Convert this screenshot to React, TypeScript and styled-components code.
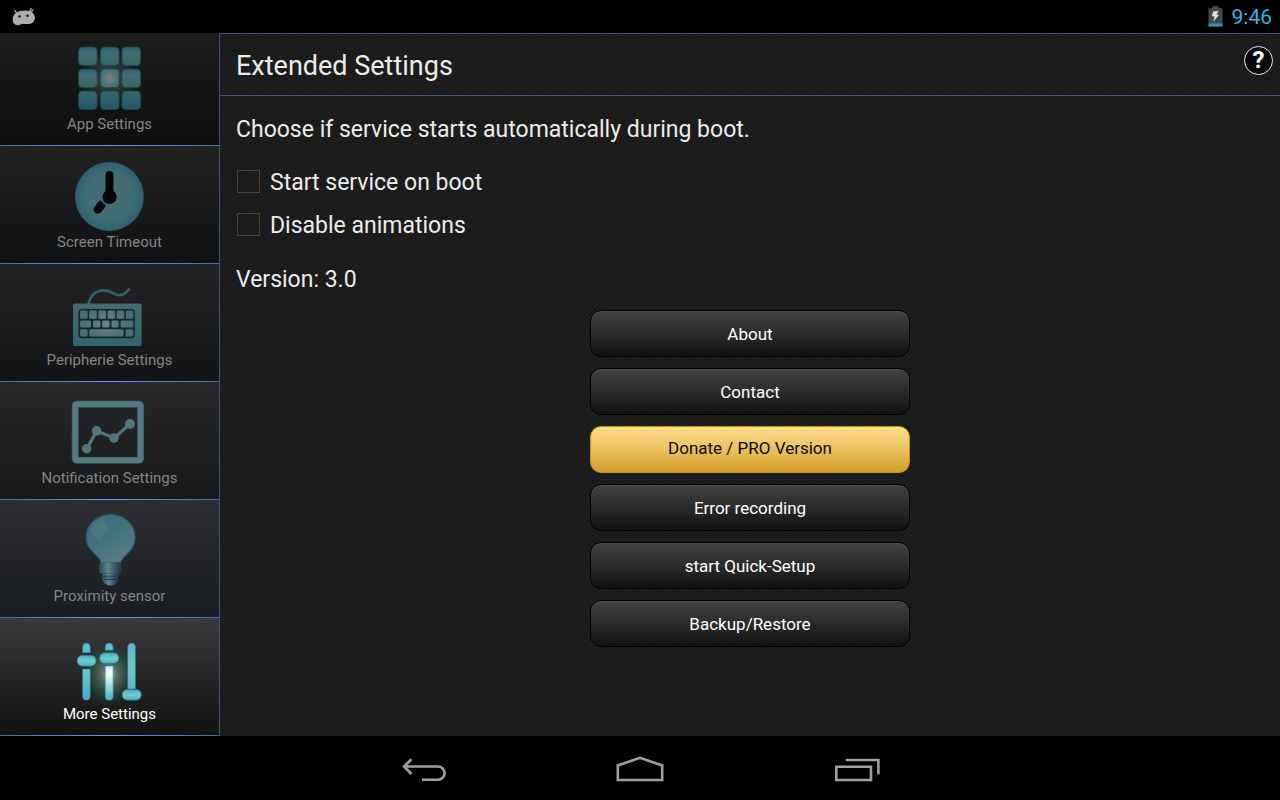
import React, { useState } from "react";
import styled, { createGlobalStyle } from "styled-components";

const GlobalStyle = createGlobalStyle`
  *, *::before, *::after { box-sizing: border-box; }
  html, body, #root { height: 100%; }
  body {
    margin: 0;
    background: #000;
    color: #ececec;
    font-family: Roboto, "Noto Sans", sans-serif;
  }
  button, input { font: inherit; color: inherit; }
`;

const Screen = styled.div`
  display: flex;
  flex-direction: column;
  min-height: 100%;
`;

const StatusBar = styled.header`
  display: flex;
  align-items: center;
  justify-content: space-between;
  height: 33px;
  padding: 0 8px 0 11px;
  background: #000;
`;

const StatusInfo = styled.div`
  display: flex;
  align-items: center;
  gap: 9px;
`;

const Clock = styled.time`
  color: #33b5e5;
  font-size: 21px;
  line-height: 33px;
  padding-top: 2px;
`;

const Body = styled.div`
  display: flex;
  flex: 1;
`;

const Sidebar = styled.nav`
  display: flex;
  flex-direction: column;
  flex: 0 0 220px;
  border-right: 1px solid #3c5284;
`;

const Tab = styled.button<{ $from: string; $to: string; $active: boolean }>`
  display: flex;
  flex-direction: column;
  align-items: center;
  justify-content: flex-end;
  flex: 1 0 118px;
  padding: 0 0 11px;
  border: 0;
  border-bottom: 1px solid;
  border-image: linear-gradient(90deg, #486cb0, #6496ff 50%, #486cb0) 1;
  background: linear-gradient(${(p) => p.$from}, ${(p) => p.$to});
  color: ${(p) => (p.$active ? "#ffffff" : "#858586")};
  font-size: 15px;
  line-height: 20px;
  cursor: pointer;

  &:first-child { flex-basis: 113px; }
`;

const TabIcon = styled.svg`
  display: block;
  width: 73px;
  height: 72px;
  overflow: visible;
`;

const Panel = styled.main`
  flex: 1;
  min-width: 0;
  background-color: #1d1d1d;
  background-image: linear-gradient(135deg, #1a1a1a 25%, #1f1f1f 25%, #1f1f1f 50%, #1a1a1a 50%, #1a1a1a 75%, #1f1f1f 75%);
  background-size: 5px 5px;
`;

const PanelHeader = styled.div`
  display: flex;
  align-items: center;
  justify-content: space-between;
  height: 63px;
  padding: 0 7px 0 16px;
  border-top: 1px solid #41547c;
  border-bottom: 1px solid #41547c;
`;

const Title = styled.h1`
  margin: 0;
  padding-top: 2px;
  font-size: 27px;
  font-weight: 400;
  line-height: 32px;
`;

const HelpButton = styled.button`
  width: 29px;
  height: 29px;
  margin-bottom: 8px;
  padding: 0;
  border: 1px solid #dcebff;
  border-radius: 50%;
  background: #090909;
  color: #fff;
  font-size: 24px;
  font-weight: 700;
  line-height: 27px;
  text-align: center;
`;

const Content = styled.div`
  padding: 20px 16px;
`;

const Text = styled.p`
  margin: 0;
  font-size: 23px;
  line-height: 28px;
`;

const Options = styled.div`
  padding: 17px 0 19px;
`;

const Option = styled.label`
  display: flex;
  align-items: center;
  gap: 10px;
  height: 43px;
  padding-left: 1px;
  font-size: 23px;
  line-height: 28px;
`;

const Checkbox = styled.input`
  appearance: none;
  width: 23px;
  height: 23px;
  margin: 0 0 2px;
  border: 1px solid #444;
  background: transparent;

  &:checked { background: #33b5e5; }
`;

const Actions = styled.div`
  display: flex;
  flex-direction: column;
  align-items: center;
  gap: 11px;
  padding-top: 16px;
`;

const ActionButton = styled.button<{ $gold?: boolean }>`
  width: 100%;
  max-width: 320px;
  height: 47px;
  padding: ${(p) => (p.$gold ? "0 0 4px" : "0")};
  border: 1px solid ${(p) => (p.$gold ? "#c0960a" : "#000")};
  border-radius: 11px;
  background: ${(p) =>
    p.$gold
      ? "linear-gradient(#fedc8c, #eac15c 50%, #d39e2a)"
      : "linear-gradient(#424242, #2b2b2b 50%, #111111)"};
  box-shadow: ${(p) => (p.$gold ? "none" : "inset 0 1px 0 #4c4c4c")};
  color: ${(p) => (p.$gold ? "#0c0800" : "#ffffff")};
  font-size: 17px;
  line-height: 22px;
  cursor: pointer;
`;

const NavBar = styled.footer`
  display: flex;
  justify-content: center;
  height: 64px;
  background: #000;
`;

const NavButton = styled.button`
  display: flex;
  align-items: center;
  justify-content: center;
  width: 216px;
  padding: 0;
  border: 0;
  background: none;
  color: #a0a0a0;
`;

const AppsIcon = () => (
  <TabIcon viewBox="0 0 73 72" aria-hidden="true">
    <defs>
      <radialGradient id="appsGlow">
        <stop offset="0" stopColor="#837f80" />
        <stop offset="1" stopColor="#42736f" />
      </radialGradient>
      <radialGradient id="appsHalo">
        <stop offset="0" stopColor="#365044" />
        <stop offset="1" stopColor="#365044" stopOpacity="0" />
      </radialGradient>
      <linearGradient id="appsTile" x2="0" y2="1">
        <stop offset="0" stopColor="#2a5f6c" />
        <stop offset="0.3" stopColor="#436c73" />
        <stop offset="1" stopColor="#37675f" />
      </linearGradient>
      <linearGradient id="appsTileLow" x2="0" y2="1">
        <stop offset="0" stopColor="#326a6c" />
        <stop offset="1" stopColor="#27566a" />
      </linearGradient>
    </defs>
    <circle cx="37" cy="37" r="30" fill="url(#appsHalo)" />
    {[5, 27, 49].map((y) =>
      [5.5, 27.5, 49].map((x) => (
        <rect
          key={`${x}-${y}`}
          x={x}
          y={y}
          width="18.6"
          height="18.6"
          rx="4"
          stroke="#1b4855"
          strokeWidth="0.8"
          fill={x === 27.5 && y === 27 ? "url(#appsGlow)" : y === 49 ? "url(#appsTileLow)" : "url(#appsTile)"}
        />
      ))
    )}
  </TabIcon>
);

const TimeoutIcon = () => (
  <TabIcon viewBox="0 0 73 72" aria-hidden="true">
    <defs>
      <radialGradient id="clockFace">
        <stop offset="0" stopColor="#4b6f73" />
        <stop offset="0.75" stopColor="#3c6d74" />
        <stop offset="1" stopColor="#2d6070" />
      </radialGradient>
    </defs>
    <circle cx="36.4" cy="36.5" r="34.4" fill="url(#clockFace)" />
    <path d="M36.5 15V36" stroke="#050707" strokeWidth="8" strokeLinecap="round" />
    <circle cx="36.5" cy="37" r="7.2" fill="#050707" />
    <path d="M28.4 44.8L24.8 49.4" stroke="#08090a" strokeWidth="8.5" strokeLinecap="round" />
    <path d="M28.3 38.5Q30 43.5 34.8 45.2" fill="none" stroke="#466f73" strokeWidth="1.6" />
  </TabIcon>
);

const keyRects = [
  ...[7, 16.2, 25.4, 34.5, 43.7, 52.8].map((x) => [x, 32.5, 7.6, 8.3]),
  [7, 42.6, 11, 7], [20, 42.6, 7.4, 7], [29.2, 42.6, 7.4, 7], [38.4, 42.6, 7.3, 7], [47.6, 42.6, 12.8, 7],
  [7, 51.3, 7.6, 7.3], [16.2, 51.3, 34.3, 7.3], [52.6, 51.3, 7.8, 7.3],
];

const KeyboardIcon = () => (
  <TabIcon viewBox="0 0 73 72" aria-hidden="true">
    <defs>
      <linearGradient id="keyboardBody" x2="0" y2="1">
        <stop offset="0" stopColor="#466a70" />
        <stop offset="1" stopColor="#32656d" />
      </linearGradient>
      <radialGradient id="keyGlow" gradientUnits="userSpaceOnUse" cx="33" cy="45" r="34">
        <stop offset="0" stopColor="#6f8484" />
        <stop offset="0.4" stopColor="#557378" />
        <stop offset="1" stopColor="#3f6971" />
      </radialGradient>
    </defs>
    <path d="M15.5 26C18 16 24 12 32 12.5S43 20 51 16Q54 14 56.5 10.5" fill="none" stroke="#306069" strokeWidth="2.8" />
    <rect x="0" y="25.5" width="68.6" height="42.5" rx="2" fill="url(#keyboardBody)" />
    <rect x="5.5" y="31" width="56.4" height="29.3" rx="3.5" fill="#12292f" />
    {keyRects.map(([x, y, w, h]) => (
      <rect key={`${x}-${y}`} x={x} y={y} width={w} height={h} rx="1.5" fill="url(#keyGlow)" />
    ))}
  </TabIcon>
);

const ChartIcon = () => (
  <TabIcon viewBox="0 0 73 72" aria-hidden="true">
    <rect x="2.2" y="8.2" width="65.4" height="56" rx="2" fill="none" stroke="#315c63" strokeWidth="7" strokeLinejoin="round" />
    <rect x="2.2" y="8.2" width="65.4" height="56" rx="1" fill="none" stroke="#557b80" strokeWidth="5.4" strokeLinejoin="round" />
    <g fill="#4f777d" stroke="#4f777d">
      <path d="M13.7 52.7L23.7 34.9L41 42L57 28" fill="none" strokeWidth="3.2" />
      <g stroke="none">
        <circle cx="13.7" cy="52.7" r="4.8" />
        <circle cx="23.7" cy="34.9" r="4.8" />
        <circle cx="41" cy="42" r="4.8" />
        <circle cx="57" cy="28" r="5" />
      </g>
    </g>
  </TabIcon>
);

const BulbIcon = () => (
  <TabIcon viewBox="0 0 73 72" aria-hidden="true">
    <defs>
      <linearGradient id="bulbGlass" x2="0.6" y2="1">
        <stop offset="0" stopColor="#396d78" />
        <stop offset="0.5" stopColor="#3f727c" />
        <stop offset="1" stopColor="#567e84" />
      </linearGradient>
      <linearGradient id="bulbBase">
        <stop offset="0" stopColor="#284e59" />
        <stop offset="0.4" stopColor="#65838b" />
        <stop offset="0.7" stopColor="#355b67" />
        <stop offset="1" stopColor="#1c3640" />
      </linearGradient>
    </defs>
    <path
      d="M37.7 0.6C51 0.6 62 10.5 62 23.5C62 31.5 58 36 53 41C50 44 48 45.5 47.5 48.5H28C27.5 45 25 43 22 40C17 35 13.2 31 13.2 23.5C13.2 10.5 24.5 0.6 37.7 0.6Z"
      fill="url(#bulbGlass)"
      stroke="#2b606c"
      strokeWidth="1.2"
    />
    <path d="M17 17Q21 7 31 3Q31 12 38 14Q30 17 28 26Q24 26 22 22Q20 23 17 17Z" fill="#6a8b90" opacity="0.3" />
    <rect x="26.2" y="48.6" width="22.4" height="11" rx="2.5" fill="url(#bulbBase)" />
    <path d="M29 59.5H46V65Q44 71.5 37.5 71.5T29 65Z" fill="url(#bulbBase)" />
    <path d="M30 62.2H45.5M31 65.4H45" stroke="#1e3f49" strokeWidth="1.1" />
  </TabIcon>
);

const SlidersIcon = () => (
  <TabIcon viewBox="0 0 73 72" aria-hidden="true">
    <defs>
      <radialGradient id="sliderHalo">
        <stop offset="0" stopColor="#d5e5dc" stopOpacity="0.85" />
        <stop offset="0.25" stopColor="#6e8a7c" stopOpacity="0.7" />
        <stop offset="0.6" stopColor="#2c5641" stopOpacity="0.6" />
        <stop offset="1" stopColor="#1c3528" stopOpacity="0" />
      </radialGradient>
      <linearGradient id="sliderBar" gradientUnits="userSpaceOnUse" x1="0" y1="11" x2="0" y2="68">
        <stop offset="0" stopColor="#5cb9d2" />
        <stop offset="0.5" stopColor="#69c8cb" />
        <stop offset="1" stopColor="#49a9c8" />
      </linearGradient>
      <radialGradient id="sliderCore" gradientUnits="userSpaceOnUse" cx="36.4" cy="41" r="24">
        <stop offset="0" stopColor="#ffffff" />
        <stop offset="0.3" stopColor="#c3eeea" />
        <stop offset="1" stopColor="#55bcc6" />
      </radialGradient>
      <linearGradient id="sliderKnob" x2="0" y2="1">
        <stop offset="0" stopColor="#4fa7bd" />
        <stop offset="0.5" stopColor="#6ad0cc" />
        <stop offset="1" stopColor="#50aebc" />
      </linearGradient>
    </defs>
    <ellipse cx="36.4" cy="42" rx="30" ry="34" fill="url(#sliderHalo)" />
    <g fill="url(#sliderBar)" stroke="#267083" strokeWidth="0.6">
      <path d="M9.5 20.7V15Q9.8 11 13.4 11T17.3 15V20.7Z" />
      <path d="M9.5 37H17.3V64.5Q17.3 68.3 13.4 68.3T9.5 64.5Z" />
      <path d="M54.6 57V15Q54.9 11 58.6 11T62.5 15V57Z" />
      <path d="M32.2 18.3V15Q32.5 11 36.2 11T40.2 15V18.3Z" />
    </g>
    <path d="M32.2 34H40.2V64.5Q40.2 68.3 36.2 68.3T32.2 64.5Z" fill="url(#sliderCore)" stroke="#357f88" strokeWidth="0.6" />
    <g fill="url(#sliderKnob)" stroke="#246d7c" strokeWidth="0.7">
      <rect x="4.2" y="23.2" width="18.8" height="11" rx="5" />
      <rect x="26.7" y="20.7" width="19" height="10.8" rx="5" />
      <rect x="49.2" y="57.4" width="19" height="10.8" rx="5" />
    </g>
  </TabIcon>
);

const tabs = [
  { label: "App Settings", from: "#1d1d1e", to: "#0e0e0e", Icon: AppsIcon },
  { label: "Screen Timeout", from: "#222222", to: "#101113", Icon: TimeoutIcon },
  { label: "Peripherie Settings", from: "#242426", to: "#131416", Icon: KeyboardIcon },
  { label: "Notification Settings", from: "#29292b", to: "#16181a", Icon: ChartIcon },
  { label: "Proximity sensor", from: "#2d2e31", to: "#1a1d20", Icon: BulbIcon },
  { label: "More Settings", from: "#3b393c", to: "#121212", Icon: SlidersIcon },
];

const actions = ["About", "Contact", "Donate / PRO Version", "Error recording", "start Quick-Setup", "Backup/Restore"];

export default function App() {
  const [active, setActive] = useState("More Settings");

  return (
    <Screen>
      <GlobalStyle />
      <StatusBar>
        <svg width="26" height="20" viewBox="0 0 26 20" aria-hidden="true">
          <path d="M3.8 3.4L6 6.5M20.2 1.4L18.5 5M22.2 3L20 5" stroke="#acacac" strokeWidth="1.3" strokeLinecap="round" />
          <path
            d="M5.5 5.6Q8 3.6 12 3.8Q17 2.6 20.5 5Q24 7 24 11Q23.5 16.5 18 17Q14 17.2 11 16.8Q8.5 18.8 5 18Q1.5 16.5 1.7 12.5Q1.6 8.4 5.5 5.6Z"
            fill="#acacac"
          />
          <circle cx="8.5" cy="9.4" r="1.2" fill="#111" />
          <circle cx="16.5" cy="8.8" r="1.2" fill="#111" />
        </svg>
        <StatusInfo>
          <svg width="15" height="21" viewBox="0 0 15 21" aria-hidden="true">
            <path d="M4.5 0H10.5V2.2H14.5V20.5H0.5V2.2H4.5Z" fill="#484848" />
            <rect x="0.5" y="17.5" width="14" height="3" fill="#2b93bd" />
            <path d="M5 5.5L10.5 4.8L8.5 8.5L11 8.8L5.5 15.5L6.5 10.6L4 10.2Z" fill="#e2e2e2" />
          </svg>
          <Clock>9:46</Clock>
        </StatusInfo>
      </StatusBar>

      <Body>
        <Sidebar aria-label="Settings sections">
          {tabs.map(({ label, from, to, Icon }) => (
            <Tab key={label} type="button" $from={from} $to={to} $active={label === active} onClick={() => setActive(label)}>
              <Icon />
              {label}
            </Tab>
          ))}
        </Sidebar>

        <Panel>
          <PanelHeader>
            <Title>Extended Settings</Title>
            <HelpButton type="button">?</HelpButton>
          </PanelHeader>
          <Content>
            <Text>Choose if service starts automatically during boot.</Text>
            <Options>
              <Option htmlFor="boot">
                <Checkbox id="boot" type="checkbox" />
                Start service on boot
              </Option>
              <Option htmlFor="animations">
                <Checkbox id="animations" type="checkbox" />
                Disable animations
              </Option>
            </Options>
            <Text>Version: 3.0</Text>
            <Actions>
              {actions.map((label) => (
                <ActionButton key={label} type="button" $gold={label.startsWith("Donate")}>
                  {label}
                </ActionButton>
              ))}
            </Actions>
          </Content>
        </Panel>
      </Body>

      <NavBar>
        <NavButton type="button" aria-label="Back">
          <svg width="48" height="28" viewBox="0 0 48 28" fill="none" stroke="currentColor" strokeWidth="2.6">
            <path d="M11.5 5.3L4 12.5L11.5 20M4 12.5H38A6.6 6.6 0 0 1 38 25.7H22" />
          </svg>
        </NavButton>
        <NavButton type="button" aria-label="Home">
          <svg width="48" height="28" viewBox="0 0 48 28" fill="none" stroke="currentColor" strokeWidth="2.6">
            <path d="M1.8 26V11.4L24 3.8L46.2 11.4V26Z" />
          </svg>
        </NavButton>
        <NavButton type="button" aria-label="Recent apps">
          <svg width="48" height="28" viewBox="0 0 48 28" fill="none" stroke="currentColor" strokeWidth="2.6">
            <path d="M4.3 12.7H39V26H4.3ZM13.8 6H46.4V20.3" />
          </svg>
        </NavButton>
      </NavBar>
    </Screen>
  );
}
